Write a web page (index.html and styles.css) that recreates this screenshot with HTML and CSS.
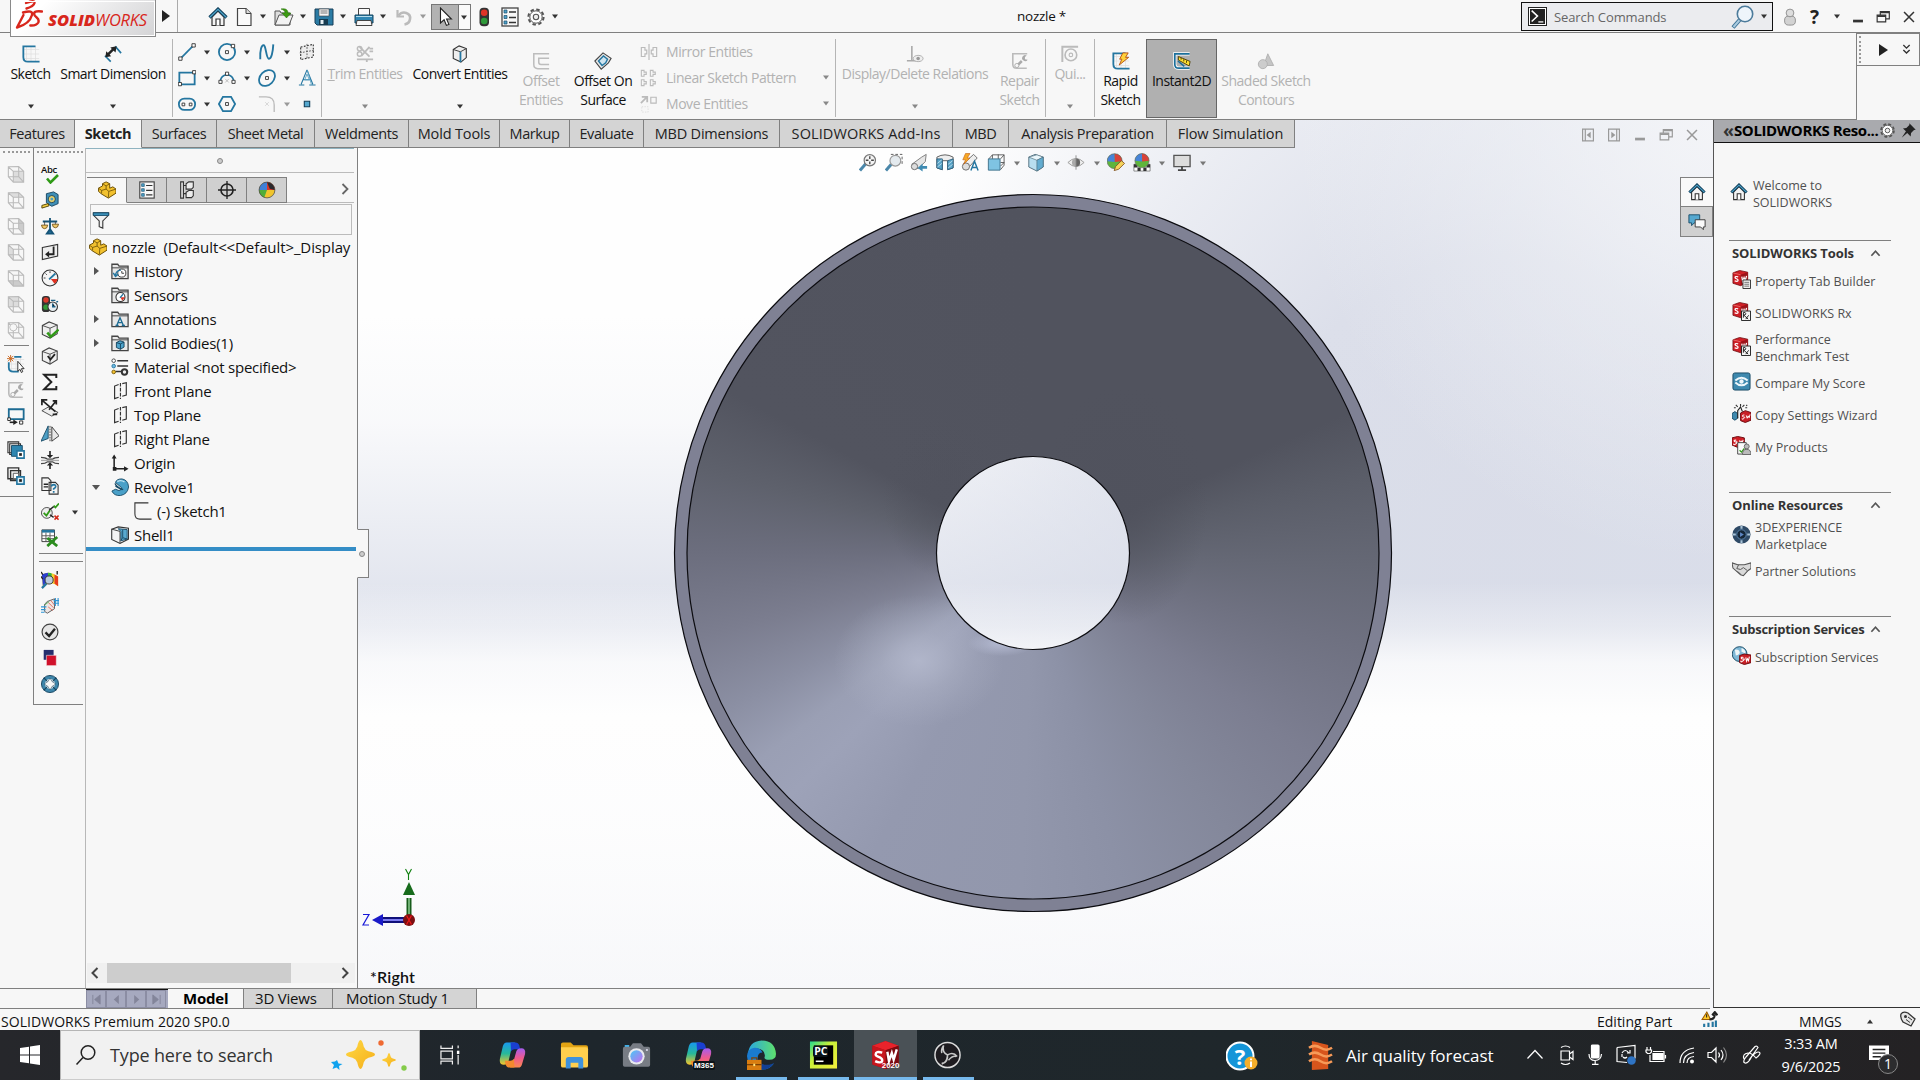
FILE: index.html
```html
<!DOCTYPE html>
<html lang="en">
<head>
<meta charset="utf-8">
<title>nozzle * - SOLIDWORKS</title>
<link rel="stylesheet" href="styles.css">
</head>
<body>
<svg class="defs" width="0" height="0">
<defs>
<linearGradient id="g-cop1" x1="0" y1="0" x2="0" y2="1"><stop offset="0" stop-color="#1897ee"/><stop offset=".5" stop-color="#27b99a"/><stop offset="1" stop-color="#f7c52a"/></linearGradient>
<linearGradient id="g-cop2" x1="0" y1="0" x2="0" y2="1"><stop offset="0" stop-color="#a45cf0"/><stop offset=".5" stop-color="#ee5a8e"/><stop offset="1" stop-color="#fb8a4e"/></linearGradient>
<linearGradient id="g-edge" x1="0" y1="0" x2="1" y2="0"><stop offset="0" stop-color="#2aa8e0"/><stop offset="1" stop-color="#5ee06c"/></linearGradient>
<linearGradient id="g-pc" x1="0" y1="0" x2="1" y2="1"><stop offset="0" stop-color="#22d88f"/><stop offset=".4" stop-color="#c8f03a"/><stop offset="1" stop-color="#f4ee3c"/></linearGradient>
<linearGradient id="g-star" x1="0" y1="0" x2="1" y2="1"><stop offset="0" stop-color="#ffd944"/><stop offset="1" stop-color="#f5ae1a"/></linearGradient>
<linearGradient id="g-cam" x1="0" y1="0" x2="1" y2="1"><stop offset="0" stop-color="#47c8f5"/><stop offset="1" stop-color="#c46cf0"/></linearGradient>
</defs>
<symbol id="caret" viewBox="0 0 8 5"><path d="M1 .5h6L4 4.5z" fill="currentColor"/></symbol>
<symbol id="home" viewBox="0 0 20 20"><path d="M4 10v8.500h12V10L10 4z" fill="#f4f4f4" stroke="#333" stroke-width="1.200"/><path d="M1.500 10.500 10 2.200l8.500 8.300" fill="none" stroke="#123f5a" stroke-width="3.200"/><path d="M1.800 10.200 10 2.400l8.200 7.800" fill="none" stroke="#4fa6cb" stroke-width="1.200"/><path d="M8 18.500v-6.500h4v6.500" fill="#fff" stroke="#333" stroke-width="1.200"/></symbol>
<symbol id="new" viewBox="0 0 20 20"><path d="M3.500 1.500h8.500l5 5v12H3.500z" fill="#fafafa" stroke="#444" stroke-width="1.200"/><path d="M12 1.500v5h5" fill="#ddd" stroke="#444"/></symbol>
<symbol id="open" viewBox="0 0 20 20"><path d="M1 18V4h5l1 2h9v12z" fill="#ddd" stroke="#555"/><path d="M1 18 5 8h14l-4 10z" fill="#f2f2f2" stroke="#555"/><path d="M7 2c5-1 7 1 7 4h3l-4.500 5L8 6h3c0-2-1-3-4-4z" fill="#3c9a12" stroke="#236a05" stroke-width=".5"/></symbol>
<symbol id="save" viewBox="0 0 20 20"><path d="M1 2h18v16H3l-2-2z" fill="#2a7ba4" stroke="#163f58"/><path d="M5 2h10v7H5z" fill="#f5f5f5" stroke="#444" stroke-width=".6"/><path d="M6.500 4h7M6.500 6h7" stroke="#777"/><path d="M5 12h9v6H5z" fill="#173b50"/><path d="M6.500 13h3v4h-3z" fill="#e4eef3"/></symbol>
<symbol id="print" viewBox="0 0 20 20"><path d="M4.500 8V1.500h11V8" fill="#fafafa" stroke="#444"/><path d="M1 8h18v8H1z" fill="#2f86b3" stroke="#15425d"/><path d="M2 9.500h16" stroke="#b5dceb"/><path d="M3 13.500h14l1 5H2z" fill="#f7f7f7" stroke="#444"/></symbol>
<symbol id="undo" viewBox="0 0 20 20"><path d="M3.500 3v6.500h6.500" fill="none" stroke="#bbb" stroke-width="2.200"/><path d="M4.500 8.500C9 3 17 6 16 12c-.4 3-2.600 5-5.500 5.500" fill="none" stroke="#bbb" stroke-width="2.600"/></symbol>
<symbol id="cursor" viewBox="0 0 20 20"><path d="M5.500 1v15l3.600-3.200 2.300 5.600 2.500-1-2.300-5.400h4.800z" fill="#fff" stroke="#222" stroke-width="1.100"/></symbol>
<symbol id="traffic" viewBox="0 0 20 20"><rect x="5.500" y=".8" width="9.500" height="18.400" rx="4" fill="#333"/><circle cx="10.200" cy="5.800" r="3.300" fill="#e03326"/><circle cx="10.200" cy="14" r="3.300" fill="#2f9a3a"/></symbol>
<symbol id="list" viewBox="0 0 20 20"><rect x="2" y="1" width="16" height="18" fill="#f8f8f8" stroke="#444" stroke-width="1.300"/><path d="M9 5h7M9 10.500h7M9 15.500h7" stroke="#333" stroke-width="1.300"/><path d="M4 3h3v3H4zM4 8.500h3v3H4zM4 14h3v3H4z" fill="#4ea2c9" stroke="#1b4f6e" stroke-width=".7"/></symbol>
<symbol id="gear" viewBox="0 0 20 20"><circle cx="10" cy="10" r="7.600" fill="none" stroke="#555" stroke-width="2" stroke-dasharray="3.500 2.470"/><circle cx="10" cy="10" r="6.200" fill="#fff" stroke="#555" stroke-width="1"/><circle cx="10" cy="10" r="2.700" fill="#eee" stroke="#555" stroke-width="1.100"/></symbol>
<symbol id="person" viewBox="0 0 20 20"><rect x="4" y="9" width="12" height="10" rx="4.500" fill="#d2d2d2" stroke="#8a8a8a"/><circle cx="10" cy="5.500" r="4.300" fill="#ddd" stroke="#8a8a8a"/></symbol>
<symbol id="restore" viewBox="0 0 20 20"><path d="M7 7.500V4h10v8h-4M3.500 8h9.500v7.500H3.500z" fill="none" stroke="currentColor" stroke-width="1.300"/><path d="M7 5h10M3.500 9h9.500" stroke="currentColor" stroke-width="1.800"/></symbol>
<symbol id="close" viewBox="0 0 20 20"><path d="M4.500 4.500l11 11M15.500 4.500l-11 11" stroke="currentColor" stroke-width="1.700"/></symbol>
<symbol id="min" viewBox="0 0 20 20"><path d="M4.500 13h11v3h-11z" fill="currentColor"/></symbol>
<symbol id="paneL" viewBox="0 0 20 20"><path d="M4 3.500h12v13H4zM7 4v12" fill="none" stroke="currentColor" stroke-width="1.300"/><path d="M13 6.500v7L8.500 10z" fill="currentColor"/></symbol>
<symbol id="mag" viewBox="0 0 24 24"><path d="M2 22.500 9 14.500" stroke="#3d7396" stroke-width="4"/><path d="M2.500 22 9 14.500" stroke="#a9cbe0" stroke-width="2"/><circle cx="14" cy="9" r="7.700" fill="#eef5fb" stroke="#4c7b9b" stroke-width="1.600"/></symbol>
<symbol id="grid" viewBox="0 0 20 20"><path d="M5 1.500v17M10 1.500v17M15 1.500v17M2 5h17M2 10h17M2 15h17" stroke="#ddd" stroke-width=".8"/></symbol>
<symbol id="sketch" viewBox="0 0 20 20"><use href="#grid"/><path d="M15 1.500H1.500v12q0 5 5 5h13" fill="none" stroke="#2476a0" stroke-width="2"/></symbol>
<symbol id="dim" viewBox="0 0 20 20"><path d="M1 12l6.500 6.500M12.500 1.500 19 9" stroke="#2476a0" stroke-width="1.800"/><path d="M4 11 11 4" stroke="#222" stroke-width="2.800"/><path d="M1.500 13.500l1-6.500 5.500 5.500zM14 1.500l-7 1.200 5.800 5.500z" fill="#222"/></symbol>
<symbol id="line" viewBox="0 0 20 20"><path d="M3 17 17 3" stroke="#2476a0" stroke-width="1.900"/><path d="M.8 15.500h3.700v3.700H.8zM15.500.8h3.700v3.700h-3.700z" fill="#fff" stroke="#333"/></symbol>
<symbol id="circ" viewBox="0 0 20 20"><circle cx="10" cy="10" r="9" fill="none" stroke="#2476a0" stroke-width="2"/><path d="M8.300 8.500h3.300v3.300H8.300zM14.800 1.500h3.700v3.700h-3.700z" fill="#fff" stroke="#333"/></symbol>
<symbol id="spline" viewBox="0 0 20 20"><path d="M2.500 18C2 8 4 1.500 6.500 2.500S9 17 12 17.500 16.500 10 17 1.500" fill="none" stroke="#2476a0" stroke-width="2.100"/></symbol>
<symbol id="plane" viewBox="0 0 20 20"><path d="M3 4.500 17 1.500v14L3 18.500z" fill="#ececec" stroke="#333" stroke-width="1.200" stroke-dasharray="2 1.600"/><path d="M10 1v17M2 11l16-3" stroke="#555" stroke-dasharray="2 1.500"/></symbol>
<symbol id="rect" viewBox="0 0 20 20"><path d="M1.500 4h17v13H1.500z" fill="none" stroke="#2476a0" stroke-width="2"/><path d="M.3 15h3.600v3.600H.3zM16.200 1.800h3.600v3.600h-3.600z" fill="#fff" stroke="#333"/></symbol>
<symbol id="arc" viewBox="0 0 20 20"><path d="M2.500 14C2.500 4 17.500 4 17.500 14" fill="none" stroke="#2476a0" stroke-width="1.900"/><path d="M1 12.500h3.500V16H1zM15.500 12.500H19V16h-3.500zM8.300 3.500h3.500V7H8.300z" fill="#fff" stroke="#333"/><path d="M8 11l4 4M12 11l-4 4" stroke="#aaa" stroke-width=".8"/></symbol>
<symbol id="ellipse" viewBox="0 0 20 20"><ellipse cx="10" cy="10" rx="10" ry="7.500" transform="rotate(-45 10 10)" fill="none" stroke="#2476a0" stroke-width="2"/><path d="M8.400 8.400h3.200v3.200H8.400z" fill="#fff" stroke="#333"/></symbol>
<symbol id="textA" viewBox="0 0 20 20"><path d="M10 1 3.500 17M10 1l6.500 16M5.500 12h9M1 17.800h6M12.500 17.800h7" fill="none" stroke="#2476a0" stroke-width="1.200"/><path d="M10.500 1.500 15 17.500M10 5.500 7.500 12h5z" fill="none" stroke="#5ea5c6" stroke-width="1"/></symbol>
<symbol id="slot" viewBox="0 0 20 20"><rect x="1" y="4" width="18" height="12.500" rx="6" fill="none" stroke="#2476a0" stroke-width="2"/><path d="M4.500 9h3v3h-3zM12.500 9h3v3h-3z" fill="#fff" stroke="#333"/></symbol>
<symbol id="poly" viewBox="0 0 20 20"><path d="M5.500 2h9L19 10l-4.500 8h-9L1 10z" fill="none" stroke="#2476a0" stroke-width="2"/><path d="M8.400 8.400h3.200v3.200H8.400z" fill="#fff" stroke="#333"/></symbol>
<symbol id="fillet" viewBox="0 0 20 20"><path d="M1 2h8q9 0 9 9v8" fill="none" stroke="#bbb" stroke-width="1.500"/><path d="M8 8l4 4M12 8l-4 4" stroke="#ccc" stroke-width=".8"/></symbol>
<symbol id="point" viewBox="0 0 20 20"><path d="M7 7h6v6H7z" fill="#55a8cf" stroke="#123f5a" stroke-width="1.200"/></symbol>
<symbol id="trim" viewBox="0 0 20 20"><path d="M4 2l11 11M15 2 6 12M1 16h18M12 16v3M15 4h4M15 7h4" stroke="#bcbcbc" stroke-width="2" fill="none"/><circle cx="4" cy="4" r="2.500" fill="none" stroke="#bcbcbc" stroke-width="1.600"/><circle cx="4" cy="10" r="2.500" fill="none" stroke="#bcbcbc" stroke-width="1.600"/></symbol>
<symbol id="convert" viewBox="0 0 20 20"><path d="M2.500 5 9 1l8 3v10l-6 5-8.500-4z" fill="#eee" stroke="#333" stroke-width="1.200"/><path d="M2.500 5l8 2.500 6.500-3.500" fill="none" stroke="#333"/><path d="M10.500 7.500V19" stroke="#2476a0" stroke-width="2"/></symbol>
<symbol id="offset" viewBox="0 0 20 20"><path d="M19 2H2v12q0 4.500 4.500 4.500H19M19 7H7.500v4.500q0 2.500 2.500 2.500h9" fill="none" stroke="#bdbdbd" stroke-width="1.700"/></symbol>
<symbol id="offsurf" viewBox="0 0 20 20"><path d="M1 10 10 1l9 6-3 5-8 7z" fill="#e8e8e8" stroke="#444" stroke-width="1.200"/><path d="M5 10l5.500-5.500L15 8l-2 4-4 3z" fill="#cfe4ef" stroke="#2476a0" stroke-width="1.600"/></symbol>
<symbol id="mirror" viewBox="0 0 20 20"><path d="M10 1v18M1.500 5v10h4v-3h2V8h-2V5zM18.500 5v10h-4v-3h-2V8h2V5z" fill="none" stroke="#bbb" stroke-width="1.300"/></symbol>
<symbol id="linpat" viewBox="0 0 20 20"><path d="M1.500 1.500v6.500h3V6h2.500V3.500H4.500v-2zM11.500 1.500v6.500h3V6h2.500V3.500h-2.500v-2zM1.500 12v6.500h3v-2h2.500V14H4.500v-2zM11.500 12v6.500h3v-2h2.500V14h-2.500v-2z" fill="none" stroke="#bbb" stroke-width="1.200"/></symbol>
<symbol id="move" viewBox="0 0 20 20"><path d="M1 9l6-6M2 2h6v6" fill="none" stroke="#bbb" stroke-width="2"/><path d="M12 2.500h6V9h-6z" fill="none" stroke="#bbb" stroke-width="1.300"/><path d="M2 13h7v6H2z" fill="none" stroke="#ddd" stroke-dasharray="1.500 1.500"/></symbol>
<symbol id="relations" viewBox="0 0 20 20"><path d="M6.500 1v16M1 17.500h10" stroke="#aaa" stroke-width="1.800"/><ellipse cx="13.500" cy="15" rx="5.500" ry="3.500" fill="#eee" stroke="#aaa"/><circle cx="13.500" cy="15" r="2" fill="#999"/></symbol>
<symbol id="repair" viewBox="0 0 20 20"><path d="M18 2H2v11.500q0 4.500 4.500 4.500h11" fill="none" stroke="#bbb" stroke-width="1.800"/><path d="M6 16l6-6" stroke="#aaa" stroke-width="2.800"/><path d="M17.500 4a3.300 3.300 0 1 0 1 4.500l-3-.5v-2.500z" fill="#aaa"/><circle cx="6.500" cy="15" r="2.300" fill="#f7f7f7" stroke="#aaa"/></symbol>
<symbol id="quick" viewBox="0 0 20 20"><path d="M1.500 19V2H19" fill="none" stroke="#bbb" stroke-width="2.200"/><circle cx="11" cy="11" r="6.500" fill="none" stroke="#bbb" stroke-width="1.800"/><circle cx="11" cy="11" r="2" fill="none" stroke="#bbb" stroke-width="1.300"/></symbol>
<symbol id="rapid" viewBox="0 0 20 20"><use href="#sketch"/><path d="M12 1h6l-3 5h3.500L8 14.500 11 8H8.500z" fill="#ffd23a" stroke="#b55014" stroke-width="1"/></symbol>
<symbol id="instant" viewBox="0 0 20 20"><path d="M18.500 2H2v11.500q0 4.500 4.500 4.500h12" fill="none" stroke="#fff" stroke-width="3.600"/><path d="M18.500 2H2v11.500q0 4.500 4.500 4.500h12" fill="none" stroke="#1c6f9a" stroke-width="1.900"/><path d="M6 5l13 5.500-1 5L6 9z" fill="#ffe033" stroke="#4a3b00"/><path d="M9 6.500v2M12 8v2.500M15 9.500v2.500" stroke="#4a3b00"/><path d="M5.500 10l7 6" stroke="#1c6f9a" stroke-width="1.800"/></symbol>
<symbol id="shaded" viewBox="0 0 20 20"><path d="M12 2l6.500 13h-11z" fill="#c5c5c5" stroke="#b0b0b0"/><circle cx="6.500" cy="13.500" r="5" fill="#ccc" stroke="#b0b0b0"/></symbol>
<!-- heads-up view toolbar -->
<symbol id="zfit" viewBox="0 0 20 20"><path d="M1 19l6.500-7.500" stroke="#4a87aa" stroke-width="3.400"/><circle cx="12" cy="7.500" r="6.300" fill="#f4f4f4" stroke="#777" stroke-width="1.300"/><path d="M12 3v3M12 9v3M7.500 7.500h3M13.500 7.500h3" stroke="#444" stroke-width="1.500"/></symbol>
<symbol id="zarea" viewBox="0 0 20 20"><path d="M6.500 1h12.500v12.500" fill="none" stroke="#555" stroke-dasharray="3 2"/><path d="M1 19l6-7" stroke="#4a87aa" stroke-width="3.400"/><circle cx="11.500" cy="8" r="6" fill="#e4eaee" stroke="#999" stroke-width="1.300"/></symbol>
<symbol id="prev" viewBox="0 0 20 20"><path d="M2 12 13 4l5-3-1 8-8 8z" fill="#e6e6e6" stroke="#777"/><circle cx="5" cy="14.500" r="3.500" fill="#ddd" stroke="#666"/><path d="M19 14h-5v-3l-5.500 5 5.500 4v-3h5z" fill="#3f8bb2"/></symbol>
<symbol id="section" viewBox="0 0 20 20"><path d="M1 4q9-5 18 0v12l-6 2V8H7v10l-6-2z" fill="#eee" stroke="#555"/><path d="M1 6h6v12l-6-2zM13 8l6-2v10l-6 2z" fill="#58a5c9" stroke="#2a5f7e"/><path d="M1.500 11l5-4M1.500 15l5-4M13.500 12l5-4M13.500 16l5-4" stroke="#d6ebf5" stroke-width=".8"/></symbol>
<symbol id="dynann" viewBox="0 0 20 20"><path d="M3 11 14 1l4 4L9 15z" fill="#eee" stroke="#666"/><circle cx="5.500" cy="14.500" r="4" fill="#ddd" stroke="#666"/><path d="M10 0H5L2 7h3l-2 5 7-7H7z" fill="#f7a823" stroke="#c4641b" stroke-width=".7"/><path d="M11 19l4-10.500 4 10.500M12.500 15.500h5" fill="none" stroke="#2476a0" stroke-width="1.600"/></symbol>
<symbol id="orient" viewBox="0 0 20 20"><path d="M6 6V1.500h13V13l-4 5M19 1.500 15 6M6 1.500 2 6M12.500 1v6M15 10h4M15 14l4-4" fill="none" stroke="#555"/><path d="M1.500 6h13v12.500h-13z" fill="#7fc3e2" stroke="#3a6e88"/></symbol>
<symbol id="dstyle" viewBox="0 0 20 20"><path d="M2 4 9 1l9 3v11l-7 4.500L2 15z" fill="#b8dff0" stroke="#4c6a79"/><path d="M2 4l9 3.500L18 4l-7-2.500z" fill="#e9f6fb" stroke="#4c6a79" stroke-width=".7"/><path d="M11 7.500 18 4v11l-7 4.500z" fill="#62acd0" stroke="#4c6a79" stroke-width=".7"/></symbol>
<symbol id="eye" viewBox="0 0 20 20"><path d="M1 10q9-9 18 0-9 9-18 0z" fill="#eee" stroke="#999"/><circle cx="10" cy="10" r="4.500" fill="#aaa"/><path d="M10 5.500v9a4.500 4.500 0 0 0 0-9z" fill="#666"/><path d="M10 2v16" stroke="#888" stroke-width="1"/></symbol>
<symbol id="ball" viewBox="0 0 20 20"><circle cx="10" cy="10" r="8.800" fill="#f0c52e"/><path d="M10 10 1.200 9.500A8.800 8.800 0 0 0 7 18.300z" fill="#4fae3a"/><path d="M10 10V1.200A8.800 8.800 0 0 0 1.200 10z" fill="#3f7fd6"/><path d="M10 10V1.200A8.800 8.800 0 0 1 18.800 10z" fill="#d9362c"/><circle cx="10" cy="10" r="8.800" fill="none" stroke="#444" stroke-width=".8"/></symbol>
<symbol id="ball-dark" viewBox="0 0 20 20"><use href="#ball"/><path d="M10 1.500q8 1 8.500 8.500L13 8.500z" fill="#2a2a2e"/></symbol>
<symbol id="ball-green" viewBox="0 0 20 20"><circle cx="10" cy="10" r="8.800" fill="#5fb53c"/><path d="M10 1.200A8.800 8.800 0 0 0 1.200 10l9 1z" fill="#4784d8"/><path d="M10 1.200A8.800 8.800 0 0 1 18.800 10l-8.600 1z" fill="#d9423a"/><circle cx="10" cy="10" r="8.800" fill="none" stroke="#666" stroke-width=".7"/></symbol>
<symbol id="appear" viewBox="0 0 20 20"><use href="#ball-green" x="-1" y="-1" width="19" height="19"/><path d="M8 19l1.500-4.500L16 8l3.500 3L13 17.500z" fill="#f5d35c" stroke="#7c4b1a" stroke-width=".9"/></symbol>
<symbol id="scene" viewBox="0 0 20 20"><path d="M1 12h18v7.500H1z" fill="#fff" stroke="#555" stroke-width=".7"/><path d="M1 12h4v3.500H1zM15 12h4v3.500h-4zM5 15.500h3.500v4H5zM11.500 15.500H15v4h-3.500z" fill="#333"/><use href="#ball-green" x="1" y="-1" width="18" height="18"/></symbol>
<symbol id="monitor" viewBox="0 0 20 20"><path d="M1 2h18v12.500H1z" fill="#dcdcdc" stroke="#555" stroke-width="1.500"/><path d="M10 14.500v4M5.500 18.500h9" stroke="#444" stroke-width="2"/></symbol>
<!-- standard views -->
<symbol id="cube" viewBox="0 0 20 20"><path d="M1.500 2v11L7 19h11.500V7L13 1.800zM7 19V7h11.500M7 7 1.500 2M13 2v11H1.500M13 13l5.500 6" fill="none" stroke="#bbb" stroke-width="1.200"/></symbol>
<symbol id="cube-a" viewBox="0 0 20 20"><path d="M7 7h11.500v12H7z" fill="#ddd"/><use href="#cube"/></symbol>
<symbol id="cube-b" viewBox="0 0 20 20"><path d="M1.500 2H13l5.500 5H7z" fill="#ddd"/><use href="#cube"/></symbol>
<symbol id="cube-c" viewBox="0 0 20 20"><path d="M13 2l5.500 5v12L13 13z" fill="#ccc"/><use href="#cube"/></symbol>
<symbol id="cube-d" viewBox="0 0 20 20"><path d="M1.500 2 7 7v12l-5.500-6z" fill="#ddd"/><use href="#cube"/></symbol>
<symbol id="cube-e" viewBox="0 0 20 20"><path d="M1.500 13H13l5.500 6H7z" fill="#ccc"/><use href="#cube"/></symbol>
<symbol id="cube-f" viewBox="0 0 20 20"><path d="M1.500 2H13v11H1.500z" fill="#ddd"/><use href="#cube"/></symbol>
<symbol id="cube-g" viewBox="0 0 20 20"><use href="#cube"/><circle cx="7" cy="7" r="4" fill="#f7f7f7" stroke="#bbb"/></symbol>
<symbol id="sksel" viewBox="0 0 20 20"><use href="#grid"/><path d="M16 2h-8M2 8v6q0 4.500 5 4.500h6" fill="none" stroke="#2476a0" stroke-width="2"/><path d="M4 0v8M0 4h8M1 1l6 6M7 1 1 7" stroke="#c8641c" stroke-width="1"/><path d="M12 7v11l2.500-2 1.500 3.500 1.500-1-1.500-3.300h3z" fill="#fff" stroke="#222"/></symbol>
<symbol id="modsk" viewBox="0 0 20 20"><path d="M2 2.500h16.500v11H2z" fill="none" stroke="#1d6b93" stroke-width="2"/><path d="M.8 12h3v3h-3zM14 15.500h3.500V19H14z" fill="#fff" stroke="#222"/><path d="M3 17h5" stroke="#222" stroke-width="1.800"/><path d="M7 14v6l5-3z" fill="#222"/></symbol>
<symbol id="stack1" viewBox="0 0 20 20"><path d="M1 1h12v12H1zM3 3h12v12H3z" fill="#eee" stroke="#333" stroke-width="1.200"/><path d="M5 5h12v12H5z" fill="#2e86b0" stroke="#174a65"/><path d="M11 11h8v8h-8z" fill="#fff" stroke="#2476a0" stroke-width="1.800"/><path d="M13.500 13.500h3v3h-3z" fill="#222"/></symbol>
<symbol id="stack2" viewBox="0 0 20 20"><path d="M1 1h12v12H1zM4 4h11v11H4z" fill="#eee" stroke="#333" stroke-width="1.500"/><path d="M7 7h6v6H7z" fill="#fff" stroke="#555"/><path d="M11 11h8v8h-8z" fill="#d9edf6" stroke="#2476a0" stroke-width="1.800"/><path d="M13.500 13.500h3v3h-3z" fill="#222"/></symbol>
<!-- tools toolbar -->
<symbol id="tape" viewBox="0 0 20 20"><path d="M6 3l8-2 5 3v10l-7 3-6-4z" fill="#3f8fb7" stroke="#14425d"/><circle cx="12" cy="9" r="4" fill="#e6d06b" stroke="#14425d"/><circle cx="12" cy="9" r="1.600" fill="#4aa0c8"/><path d="M8 14 1 16v3l8-2.500z" fill="#f4cf3f" stroke="#4a3b00"/></symbol>
<symbol id="scale" viewBox="0 0 20 20"><path d="M10 1v15M2 5h16M6.500 18.500h7l-3.500-5z" stroke="#155478" stroke-width="2" fill="#2476a0"/><path d="M.5 9h7q-.5 4-3.500 4T.5 9zM12.500 8h7q-.5 4-3.500 4t-3.500-4z" fill="#f0c96a" stroke="#6b4a10" stroke-width=".9"/><path d="M4 5v4M16 5v3" stroke="#333" stroke-width=".8"/></symbol>
<symbol id="secprop" viewBox="0 0 20 20"><path d="M1.500 5 18.500 1.500v13L1.500 18.500z" fill="#eee" stroke="#333" stroke-width="1.200"/><path d="M14 4v8.500H7" fill="none" stroke="#222" stroke-width="2"/><path d="M9 9v7l-4.500-3.500z" fill="#222"/></symbol>
<symbol id="gauge" viewBox="0 0 20 20"><circle cx="10" cy="10" r="8.800" fill="#f4f4f4" stroke="#333" stroke-width="1.200"/><path d="M11 11h7.500a8.500 8.500 0 0 1-3.500 5.500z" fill="#e03020"/><path d="M9 11.500 16 5" stroke="#2476a0" stroke-width="2"/><path d="M3 10h2M10 2.500v2M5 5l1.500 1.500" stroke="#333"/></symbol>
<symbol id="perf" viewBox="0 0 20 20"><rect x="1" y="1" width="9" height="18" rx="3.500" fill="#333"/><circle cx="5.500" cy="5.500" r="3" fill="#d93a2c"/><circle cx="5.500" cy="13.500" r="3" fill="#319a38"/><circle cx="13" cy="13" r="5.300" fill="#e9eff2" stroke="#333" stroke-width="1.200"/><path d="M13 9.500V13h3M11 6h5M17 8l2-1" stroke="#1b5f85" stroke-width="1.500"/></symbol>
<symbol id="box" viewBox="0 0 20 20"><path d="M1.500 5 9 1l9 3.500v9.500l-8 5-8.500-4z" fill="#efefef" stroke="#444" stroke-width="1.200"/><path d="M1.500 5 10 8l8-3.500M10 8v11" fill="none" stroke="#444"/></symbol>
<symbol id="boxcheck" viewBox="0 0 20 20"><use href="#box"/><path d="M7 13l4 4.500 8.500-8" fill="none" stroke="#2f9a16" stroke-width="2.800"/></symbol>
<symbol id="boxtick" viewBox="0 0 20 20"><use href="#box"/><path d="M7.500 10l3 4 5-6" fill="none" stroke="#222" stroke-width="2"/></symbol>
<symbol id="sigma" viewBox="0 0 20 20"><path d="M17 5.500V2H3.500l8 8-8 8H17v-3.500" fill="none" stroke="#222" stroke-width="2.200"/></symbol>
<symbol id="dev" viewBox="0 0 20 20"><path d="M1 13l7-4 11 6-7 4z" fill="#eee" stroke="#444"/><path d="M2 2l14 12M9 12l7-9M1 7V1h6M13 2h4v4M18 17h-5" fill="none" stroke="#222" stroke-width="1.900"/></symbol>
<symbol id="symm" viewBox="0 0 20 20"><path d="M8 1v14L0 18z" fill="#4d9fc5" stroke="#174a65"/><path d="M12 2l8 10-8 6z" fill="#e8e8e8" stroke="#333"/><path d="M10 1v18" stroke="#333" stroke-dasharray="2 1"/></symbol>
<symbol id="thick" viewBox="0 0 20 20"><path d="M0 7q5 0 7 2h6q2-2 7-2M0 14q5 0 7-2h6q2 2 7 2" fill="none" stroke="#444" stroke-width="1.300"/><path d="M0 10.500h20" stroke="#aaa" stroke-width="1.500"/><path d="M10 0v5M10 20v-5" stroke="#222" stroke-width="1.800"/><path d="M6.500 4.500h7L10 8zM6.500 16h7L10 12.500z" fill="#222"/></symbol>
<symbol id="docq" viewBox="0 0 20 20"><path d="M1 1h7l3 3v11H1zM9 6h7l3 3v10H9z" fill="#f4f4f4" stroke="#333" stroke-width="1.200"/><path d="M3 8h5M3 11h5" stroke="#222" stroke-width="1.500"/><path d="M11.500 10.500q.5-2 2.700-2 2.300.2 2.100 2.200-.2 1.300-2.200 2.300v1.300M14.100 15.600v1.800" fill="none" stroke="#2476a0" stroke-width="1.900"/></symbol>
<symbol id="dchk" viewBox="0 0 20 20"><circle cx="6.500" cy="11" r="6" fill="#eee" stroke="#444"/><path d="M3 11l3 3 4-6M14 3l2 2 4-4.500" fill="none" stroke="#2f9a16" stroke-width="2"/><path d="M9 8l5-4M10 13l4 3" stroke="#222" stroke-width="1.500"/><path d="M15 14l4.500 4.500M19.500 14 15 18.500" stroke="#d32a1a" stroke-width="1.700"/></symbol>
<symbol id="xls" viewBox="0 0 20 20"><path d="M1 1h14v13H1z" fill="#fff" stroke="#333"/><path d="M1 1h14v3H1z" fill="#2476a0"/><path d="M1 7.500h14M1 10.700h14M5.500 4v10M10 4v10" stroke="#555"/><path d="M7 10l11 9M18 9 7 19" stroke="#2b8c1e" stroke-width="3"/></symbol>
<symbol id="simx" viewBox="0 0 20 20"><path d="M1 4q9-5 18 2v11q-8-7-17 0z" fill="#f5d02e"/><path d="M1 4q4-2 7-2l-1 11q-3 1-5 3z" fill="#2b3fd0"/><path d="M8 2q3 0 4 1l-1 10-4-.5z" fill="#35b341"/><path d="M15 4l4 2v11l-4-3z" fill="#e83a1e"/><circle cx="9" cy="10" r="4.500" fill="#bcd" stroke="#333"/><path d="M1 19l5-5" stroke="#2476a0" stroke-width="2.500"/><path d="M0 1l2 3M0 6l2 3M18 0v4" stroke="#222" stroke-width="1.500"/></symbol>
<symbol id="flow" viewBox="0 0 20 20"><path d="M7 5l8-3v11l-8 5-3-2V8z" fill="#efe6e4" stroke="#555"/><path d="M8 6l6 6M8 11l5 4M11 4l4 5" stroke="#e06a5a"/><path d="M0 11h6M0 14h5M0 17h4M14 4h6M14 7h6M16 1v9M19 1v9" stroke="#2f97d8" stroke-width="1.200"/><path d="M4 9l5-4" stroke="#4eb45c"/></symbol>
<symbol id="okc" viewBox="0 0 20 20"><circle cx="10" cy="10" r="8.800" fill="#e6e6e6" stroke="#444" stroke-width="1.300"/><path d="M5 10.500l4 4 6.500-8" fill="none" stroke="#222" stroke-width="2.600"/></symbol>
<symbol id="sqs" viewBox="0 0 20 20"><path d="M3 1h11v11H3z" fill="#252e6e"/><path d="M6 7h11v11.500H6z" fill="#d0112b" stroke="#f7f7f7" stroke-width=".6"/></symbol>
<symbol id="life" viewBox="0 0 20 20"><circle cx="10" cy="10" r="7.500" fill="#f7f7f7" stroke="#3d86ab" stroke-width="4"/><circle cx="10" cy="10" r="9.500" fill="none" stroke="#14425d" stroke-width="1"/><path d="M10 3.500l2.500 4 4 2.500-4 2.500-2.500 4-2.500-4-4-2.500 4-2.500z" fill="#f7f7f7" stroke="#14425d" stroke-width=".6"/><path d="M3 3l4 4M17 3l-4 4M3 17l4-4M17 17l-4-4" stroke="#14425d" stroke-width="1.200"/></symbol>
<!-- feature tree -->
<symbol id="part" viewBox="0 0 20 20"><path d="M.5 8 5 5.500V3L9 1l4 2v5l3.500-1.500L20 9v4.500L11.500 19 4 14.500.5 11.500z" fill="#f2c12e" stroke="#6d5106" stroke-width="1.100"/><path d="M5 3l4 2.500L13 3M9 5.500V9l3 2.500L20 9M.5 8l3.500 2.500V14M4 10.500l5-1.500M12 11.500l-.5 7" fill="none" stroke="#6d5106" stroke-width=".9"/></symbol>
<symbol id="config" viewBox="0 0 20 20"><path d="M3 1h3v18H3zM6 5h3M6 14h3" stroke="#333" stroke-width="1.300" fill="#f4f4f4"/><path d="M9 3l3-2h5v6l-2 2H9zM9 12.500l3-2h5v6l-2 2H9z" fill="#ececec" stroke="#333" stroke-width="1.200"/></symbol>
<symbol id="target" viewBox="0 0 20 20"><circle cx="10" cy="10" r="6.700" fill="none" stroke="#222" stroke-width="1.800"/><path d="M10 0v20M0 10h20" stroke="#222" stroke-width="1.500"/></symbol>
<symbol id="funnel" viewBox="0 0 20 20"><path d="M1.500 2h17v2.500L12 11v8l-4-1.500V11L1.500 4.500z" fill="#f0f0f0" stroke="#333" stroke-width="1.200"/><path d="M1.500 2h17v3h-17z" fill="#3a8eb6" stroke="#17506f"/></symbol>
<symbol id="folder" viewBox="0 0 20 20"><path d="M1 18.500V2.500h6.500l1.500 2h10v14z" fill="#e8e8e8" stroke="#444" stroke-width="1.400"/><path d="M1 6.500h18" stroke="#444" stroke-width="1.100"/></symbol>
<symbol id="f-hist" viewBox="0 0 20 20"><use href="#folder"/><circle cx="12" cy="12.300" r="4.500" fill="#fff" stroke="#333"/><path d="M12 10v2.500h2.500" stroke="#333" fill="none"/><path d="M5 15.500q0-6 6-6.500M2.500 12l2.500 4 3-2.500" stroke="#2476a0" stroke-width="1.600" fill="none"/></symbol>
<symbol id="f-sens" viewBox="0 0 20 20"><use href="#folder"/><circle cx="10.500" cy="12.300" r="5" fill="#fff" stroke="#333" stroke-width="1.200"/><path d="M10.500 12.500h5l-3 4z" fill="#e03020"/><path d="M10 13l3.500-4" stroke="#2476a0" stroke-width="1.500"/></symbol>
<symbol id="f-ann" viewBox="0 0 20 20"><use href="#folder"/><path d="M6.500 17 10 8.500 13.700 17M7.500 14h5M5 17.200h3.500M12 17.200h3.500" fill="none" stroke="#1d6b93" stroke-width="1.500"/></symbol>
<symbol id="f-body" viewBox="0 0 20 20"><use href="#folder"/><path d="M6 9.500l4-2 4.500 1.500v5.500l-4 2.500L6 15z" fill="#4ea5cd" stroke="#123f5a"/><path d="M6 9.500l4.500 1.500 4-2M10.500 11v6" stroke="#123f5a" fill="none"/></symbol>
<symbol id="material" viewBox="0 0 20 20"><path d="M7 3h12M7 9h12M5 15h14" stroke="#333" stroke-width="1.700"/><circle cx="3" cy="3" r="2" fill="#fff" stroke="#444"/><circle cx="3" cy="9" r="2" fill="#6fb9e0" stroke="#2476a0"/><circle cx="3" cy="15.500" r="2" fill="#f2c12e" stroke="#7c5b06"/><circle cx="15" cy="15.500" r="3" fill="#eee" stroke="#333" stroke-width="2.200"/></symbol>
<symbol id="f-plane" viewBox="0 0 20 20"><path d="M8.500 2.800 4 4.500v14l4.500-1.600M12.500 1.800 17 .8v13.700l-4.500 1.400" fill="none" stroke="#333" stroke-width="1.300"/><path d="M10.500 1v18" stroke="#333" stroke-width="1.300" stroke-dasharray="4 1.500"/></symbol>
<symbol id="origin" viewBox="0 0 20 20"><path d="M3.500 3v13.500H17" fill="none" stroke="#222" stroke-width="1.700"/><path d="M.8 5 3.500.5 6.200 5zM14.500 13.500l5 3-5 3zM2 14.500h4v4H2z" fill="#222"/></symbol>
<symbol id="revolve" viewBox="0 0 20 20"><path d="M5 5q1-4 7-4 7 1 7.500 9-1 8-9 9.500-7 .5-9.500-5l4-2 4 1.500q3-1 3-3z" fill="#4aa0c8" stroke="#174a65"/><path d="M4.500 6q1 4 9 7M5 9l7 4" stroke="#174a65" stroke-width="1.500" fill="none"/><path d="M7 4q4-2.500 8 .5" stroke="#bfe3f2" stroke-width="1.500" fill="none"/></symbol>
<symbol id="f-sketch" viewBox="0 0 20 20"><path d="M16 1H1v12q0 6 5.500 6h13" fill="none" stroke="#333" stroke-width="1.200"/></symbol>
<symbol id="shell" viewBox="0 0 20 20"><path d="M.8 3.500 8 1l11.500 1.500v12L10 19.300.8 15z" fill="#f4f4f4" stroke="#333" stroke-width="1.200"/><path d="M.8 3.500 10 6v13" fill="none" stroke="#333"/><path d="M8 3l10 1v10.500l-7 2V6z" fill="#58a9cf" stroke="#174a65"/><path d="M13 4v9l5 1.500M13 13l-2 3" stroke="#174a65" fill="none"/></symbol>
<!-- task pane -->
<symbol id="chat" viewBox="0 0 20 20"><path d="M1 2h12v9H7l-3 3v-3H1z" fill="#55a8cf" stroke="#174a65"/><path d="M8 7.500h11v8h-2v3l-3-3H8z" fill="#fafafa" stroke="#333"/></symbol>
<symbol id="swcube" viewBox="0 0 20 20"><path d="M1 3 8 .5l8.500 1.800V13L9 16.500 1 14z" fill="#cf1f26" stroke="#6d0a0e" stroke-width=".8"/><path d="M9 5l7.500-2.700V13L9 16.500z" fill="#9c1218"/><path d="M1 3 9 5" stroke="#ef7a76" fill="none" stroke-width=".8"/><path d="M6.500 7.200q-3.300-1-3.300.8c0 1.400 3.200 1 3.200 2.700 0 1.500-2 1.400-3.600.6M10.300 7l.9 5 1.500-4 1.200 3.200 1.400-5" fill="none" stroke="#fff" stroke-width="1.300"/></symbol>
<symbol id="sw-tab" viewBox="0 0 20 20"><use href="#swcube"/><path d="M11.500 10.500h8v9h-8z" fill="#eee" stroke="#333"/><path d="M13 13h5M13 15h5M13 17h5" stroke="#555" stroke-width=".8"/></symbol>
<symbol id="sw-rx" viewBox="0 0 20 20"><use href="#swcube"/><path d="M10 9.500h9.500v10H10z" fill="#f4f4f4" stroke="#222"/><path d="M12 16.500v-5.500h1.700q1.600 1.300 0 2.700H12.300l4.700 4.300M17.500 14l-3 4" fill="none" stroke="#222" stroke-width="1"/></symbol>
<symbol id="score" viewBox="0 0 20 20"><rect x="1" y="1" width="18" height="18" rx="2" fill="#3e89ae" stroke="#174a65"/><path d="M3.500 9q6.500-6 13 0M16.500 11q-6.500 6-13 0" stroke="#eef7fb" stroke-width="2" fill="none"/><circle cx="10" cy="10" r="2.300" fill="#eef7fb"/></symbol>
<symbol id="sw-wiz" viewBox="0 0 20 20"><path d="M0 10l3-2 3 2v5l-3 2-3-2z" fill="#3e89ae" stroke="#174a65"/><path d="M6 15V7l3-4 2 5" fill="#eee" stroke="#222" stroke-width="1.200"/><path d="M4 1l2 2M9 0v2M13 1l-2 2M2 4h2M14 4h2M16 1l-1 1" stroke="#333" stroke-width="1.200"/><path d="M9 9.500l5-2.500 6 2v8L14 19.500l-5-2z" fill="#c81f26" stroke="#6d0a0e"/><path d="M13 11.500q-2.500 0-2 1.300t2 1-.5 1.500-1.800-.2M15 12l1 3 1-2.500 1 2 1-3.500" fill="none" stroke="#fff" stroke-width="1"/></symbol>
<symbol id="sw-prod" viewBox="0 0 20 20"><path d="M0 2l6-1.500 7 1.500v8L6 12 0 9.500z" fill="#cf1f26" stroke="#6d0a0e"/><path d="M4.500 4.500q-2.500-.5-2.300.7t2.300 1-.5 2-2-.2M8 4.500l.7 3 1-2 1 1.500 1-3" fill="none" stroke="#fff" stroke-width="1.100"/><path d="M6 7h9v12H6z" fill="#fafafa" stroke="#444"/><path d="M8 15l2 2 3-4" stroke="#2f9a16" fill="none" stroke-width="1.300"/><circle cx="15.500" cy="11" r="2.600" fill="#bbb" stroke="#666"/><path d="M11 19.500q0-5.500 4.500-5.500t4.500 5.500z" fill="#bbb" stroke="#666"/></symbol>
<symbol id="3dx" viewBox="0 0 20 20"><circle cx="10" cy="10" r="9.500" fill="#2f4a66"/><circle cx="10" cy="10" r="5" fill="#152637" stroke="#5e87b0"/><path d="M8.500 7.500v5l4-2.500z" fill="#5d86c4"/><path d="M10 1v3M10 16v3M1 10h3M16 10h3" stroke="#a8c3d8" stroke-width="2.200"/></symbol>
<symbol id="hands" viewBox="0 0 20 20"><path d="M0 3l6 2h7l7-2v6l-3 2-5 5.500-3-1-8-7z" fill="#d9d9d9" stroke="#555" stroke-width="1.100"/><path d="M7 5l-2 4 4 1 3-2 4 3M6 12l3 3" stroke="#555" fill="none"/></symbol>
<symbol id="sw-sub" viewBox="0 0 20 20"><circle cx="8" cy="8.500" r="7.800" fill="#7fb8d6" stroke="#174a65"/><path d="M3 4q4-1 5 2t-4 4zM10 2q5 2 4 6l-4-2z" fill="#eef5f8"/><path d="M8 10l5-1.500 7 1v8L13 19.500l-5-2z" fill="#c81f26" stroke="#6d0a0e"/><path d="M12 12q-2.500-.5-2.300.7t2.300 1-.5 2-2-.2M14.500 12l.8 4 1-2.500 1 2 1-4.200" fill="none" stroke="#fff" stroke-width="1.100"/></symbol>
<symbol id="pin" viewBox="0 0 20 20"><path d="M11 1.500l7.500 7.500-2 .5-3.500 3.500-.5 4-4-4L2 18.500 7 11 3.500 7.500l4-.5L11 3.500z" fill="#222"/></symbol>
<!-- taskbar -->
<symbol id="sparkle" viewBox="0 0 20 20"><path d="M10 0q1.300 0 2.200 4.500.8 2.500 3.300 3.300Q20 8.700 20 10q0 1.300-4.500 2.200-2.500.8-3.300 3.300Q11.300 20 10 20q-1.300 0-2.200-4.500-.8-2.500-3.300-3.300Q0 11.300 0 10q0-1.300 4.500-2.200 2.500-.8 3.300-3.300Q8.700 0 10 0z" fill="url(#g-star)"/></symbol>
<symbol id="copilot" viewBox="0 0 30 30"><path d="M9 2h9q-3 1-4.500 8L11 21q-1 4-5 4-5 0-4-6L5 6q1-4 4-4z" fill="url(#g-cop1)"/><path d="M13 2h5q3 0 4 3l1 4h-6q-2 0-3.500 2z" fill="#1a3fd0"/><path d="M21 28h-9q3-1 4.500-8L19 11q1-3 5-3 5 0 4 6l-3 10q-1 4-4 4z" fill="url(#g-cop2)"/><path d="M17 28h-5q-3 0-4-3l-1-4h6q2 0 3.500-2z" fill="#f28a2e"/></symbol>
</svg>

<header class="titlebar">
  <div class="brand">
    <svg class="ds" viewBox="0 0 28 32"><g fill="none" stroke="#d8261c" stroke-width="2.400" stroke-linecap="round" stroke-linejoin="round"><path d="M11 4q9-3.500 8.500 0-1 3.500-8 5.500"/><path d="M8 13.500q10.500-3 9 2.500Q14.500 25 2 28.500L8.500 16"/><path d="M27 12.500q-7.500-1-8 2 0 2 2.700 4t1.600 5q-2 3.500-8 3"/></g></svg>
    <span class="brand-name"><b>SOLID</b>WORKS</span>
  </div>
  <span class="brand-arrow"></span>
  <div class="quick">
    <svg class="ic gap6"><use href="#home"/></svg>
    <svg class="ic"><use href="#new"/></svg><span class="cc"><svg class="caret"><use href="#caret"/></svg></span>
    <svg class="ic"><use href="#open"/></svg><span class="cc"><svg class="caret"><use href="#caret"/></svg></span>
    <svg class="ic"><use href="#save"/></svg><span class="cc"><svg class="caret"><use href="#caret"/></svg></span>
    <svg class="ic"><use href="#print"/></svg><span class="cc"><svg class="caret"><use href="#caret"/></svg></span>
    <svg class="ic"><use href="#undo"/></svg><span class="cc last dim"><svg class="caret"><use href="#caret"/></svg></span>
    <span class="select-btn"><i><svg class="ic"><use href="#cursor"/></svg></i><svg class="caret"><use href="#caret"/></svg></span>
    <svg class="ic gap6"><use href="#traffic"/></svg>
    <svg class="ic gap6"><use href="#list"/></svg>
    <svg class="ic"><use href="#gear"/></svg><span class="cc"><svg class="caret"><use href="#caret"/></svg></span>
  </div>
  <div class="doc-title">nozzle *</div>
  <div class="search"><span class="prompt"><svg viewBox="0 0 18 18"><path d="M2 2l7 6.500L2 15" fill="none" stroke="#fff" stroke-width="1.800"/><path d="M10 15.500h6" stroke="#fff" stroke-width="1.500"/></svg></span><span class="search-text">Search Commands</span><svg class="mag"><use href="#mag"/></svg><svg class="caret"><use href="#caret"/></svg></div>
  <div class="winctl">
    <svg class="ic person"><use href="#person"/></svg><span class="qm">?</span><svg class="caret"><use href="#caret"/></svg>
    <svg class="ic b1"><use href="#min"/></svg><svg class="ic b2"><use href="#restore"/></svg><svg class="ic b3"><use href="#close"/></svg>
  </div>
</header>

<div class="ribbon-row">
<div class="ribbon">
  <div class="cmd w61"><svg class="ic"><use href="#sketch"/></svg><span>Sketch</span><svg class="caret"><use href="#caret"/></svg></div>
  <div class="cmd w104"><svg class="ic"><use href="#dim"/></svg><span>Smart Dimension</span><svg class="caret"><use href="#caret"/></svg></div>
  <i class="vsep ml7"></i>
  <div class="entities">
    <svg class="ic"><use href="#line"/></svg><svg class="caret"><use href="#caret"/></svg><svg class="ic"><use href="#circ"/></svg><svg class="caret"><use href="#caret"/></svg><svg class="ic"><use href="#spline"/></svg><svg class="caret"><use href="#caret"/></svg><svg class="ic"><use href="#plane"/></svg>
    <svg class="ic"><use href="#rect"/></svg><svg class="caret"><use href="#caret"/></svg><svg class="ic"><use href="#arc"/></svg><svg class="caret"><use href="#caret"/></svg><svg class="ic"><use href="#ellipse"/></svg><svg class="caret"><use href="#caret"/></svg><svg class="ic"><use href="#textA"/></svg>
    <svg class="ic"><use href="#slot"/></svg><svg class="caret"><use href="#caret"/></svg><svg class="ic"><use href="#poly"/></svg><i></i><svg class="ic"><use href="#fillet"/></svg><svg class="caret dim"><use href="#caret"/></svg><svg class="ic"><use href="#point"/></svg>
  </div>
  <i class="vsep"></i>
  <div class="cmd w86 off"><svg class="ic"><use href="#trim"/></svg><span><u>T</u>rim Entities</span><svg class="caret"><use href="#caret"/></svg></div>
  <div class="cmd w104"><svg class="ic"><use href="#convert"/></svg><span>Convert Entities</span><svg class="caret"><use href="#caret"/></svg></div>
  <div class="cmd two w58 off"><svg class="ic"><use href="#offset"/></svg><span>Offset<br>Entities</span></div>
  <div class="cmd two w66"><svg class="ic"><use href="#offsurf"/></svg><span>Offset On<br>Surface</span></div>
  <div class="stack off">
    <div><svg class="ic"><use href="#mirror"/></svg><span>Mirror Entities</span></div>
    <div><svg class="ic"><use href="#linpat"/></svg><span>Linear Sketch Pattern</span><svg class="caret"><use href="#caret"/></svg></div>
    <div><svg class="ic"><use href="#move"/></svg><span>Move Entities</span><svg class="caret"><use href="#caret"/></svg></div>
  </div>
  <i class="vsep"></i>
  <div class="cmd w158 off"><svg class="ic"><use href="#relations"/></svg><span>Display/Delete Relations</span><svg class="caret"><use href="#caret"/></svg></div>
  <div class="cmd two w51 off"><svg class="ic"><use href="#repair"/></svg><span>Repair<br>Sketch</span></div>
  <i class="vsep"></i>
  <div class="cmd w48 off"><svg class="ic"><use href="#quick"/></svg><span>Qui...</span><svg class="caret"><use href="#caret"/></svg></div>
  <i class="vsep"></i>
  <div class="cmd two w51"><svg class="ic"><use href="#rapid"/></svg><span>Rapid<br>Sketch</span></div>
  <div class="cmd two w71 on"><svg class="ic"><use href="#instant"/></svg><span>Instant2D</span></div>
  <div class="cmd two w98 off"><svg class="ic"><use href="#shaded"/></svg><span>Shaded Sketch<br>Contours</span></div>
</div>
<div class="mini-bar"><i class="grip-v"></i><i class="play"></i><svg class="dbl" viewBox="0 0 10 12"><path d="M1.500 1 5 4.500 8.500 1M1.500 6.500 5 10l3.500-3.500" fill="none" stroke="#333" stroke-width="1.500"/></svg></div>
</div>

<div class="middle">
<main class="workspace">
  <nav class="cm-tabs"><span class="t1">Features</span><span class="t2 active">Sketch</span><span class="t3">Surfaces</span><span class="t4">Sheet Metal</span><span class="t5">Weldments</span><span class="t6">Mold Tools</span><span class="t7">Markup</span><span class="t8">Evaluate</span><span class="t9">MBD Dimensions</span><span class="t10">SOLIDWORKS Add-Ins</span><span class="t11">MBD</span><span class="t12">Analysis Preparation</span><span class="t13">Flow Simulation</span></nav>
  <div class="doc-area">
    <div class="side">
    <div class="bar bar1">
      <i class="grip"></i>
      <svg class="ic"><use href="#cube-a"/></svg><svg class="ic"><use href="#cube-b"/></svg><svg class="ic"><use href="#cube-c"/></svg><svg class="ic"><use href="#cube-d"/></svg><svg class="ic"><use href="#cube-e"/></svg><svg class="ic"><use href="#cube-f"/></svg><svg class="ic"><use href="#cube-g"/></svg>
      <i class="hsep"></i>
      <svg class="ic"><use href="#sksel"/></svg><svg class="ic"><use href="#repair"/></svg><svg class="ic"><use href="#modsk"/></svg>
      <i class="hsep"></i>
      <svg class="ic"><use href="#stack1"/></svg><svg class="ic"><use href="#stack2"/></svg>
    </div>
    <div class="bar bar2">
      <i class="grip"></i>
      <div class="abc"><b>Abc</b><svg viewBox="0 0 13 10"><path d="M1 4.500 4.500 8.500 12 1" fill="none" stroke="#2f9a16" stroke-width="2.600"/></svg></div>
      <svg class="ic"><use href="#tape"/></svg><svg class="ic"><use href="#scale"/></svg><svg class="ic"><use href="#secprop"/></svg><svg class="ic"><use href="#gauge"/></svg><svg class="ic"><use href="#perf"/></svg><svg class="ic"><use href="#boxcheck"/></svg><svg class="ic"><use href="#boxtick"/></svg><svg class="ic"><use href="#sigma"/></svg><svg class="ic"><use href="#dev"/></svg><svg class="ic"><use href="#symm"/></svg><svg class="ic"><use href="#thick"/></svg><svg class="ic"><use href="#docq"/></svg>
      <div class="with-caret"><svg class="ic"><use href="#dchk"/></svg><svg class="caret"><use href="#caret"/></svg></div>
      <svg class="ic"><use href="#xls"/></svg>
      <i class="hsep h1"></i><i class="hsep h2"></i>
      <svg class="ic"><use href="#simx"/></svg><svg class="ic"><use href="#flow"/></svg><svg class="ic"><use href="#okc"/></svg><svg class="ic"><use href="#sqs"/></svg><svg class="ic"><use href="#life"/></svg>
    </div>
    </div>
    <aside class="fm">
      <div class="fm-top"><i class="dot"></i></div>
      <div class="fm-tabs"><span class="active"><svg class="ic"><use href="#part"/></svg></span><span><svg class="ic"><use href="#list"/></svg></span><span><svg class="ic"><use href="#config"/></svg></span><span><svg class="ic"><use href="#target"/></svg></span><span><svg class="ic"><use href="#ball-dark"/></svg></span><svg class="more" viewBox="0 0 8 12"><path d="M1.500 1 6.500 6l-5 5" fill="none" stroke="#666" stroke-width="1.800"/></svg></div>
      <div class="filter"><svg class="ic"><use href="#funnel"/></svg></div>
      <div class="tree">
        <div class="root"><svg class="ic"><use href="#part"/></svg><span>nozzle&nbsp; (Default&lt;&lt;Default&gt;_Display</span></div>
        <div><i class="tw r"></i><svg class="ic"><use href="#f-hist"/></svg><span>History</span></div>
        <div><i class="tw"></i><svg class="ic"><use href="#f-sens"/></svg><span>Sensors</span></div>
        <div><i class="tw r"></i><svg class="ic"><use href="#f-ann"/></svg><span>Annotations</span></div>
        <div><i class="tw r"></i><svg class="ic"><use href="#f-body"/></svg><span>Solid Bodies(1)</span></div>
        <div><i class="tw"></i><svg class="ic"><use href="#material"/></svg><span>Material &lt;not specified&gt;</span></div>
        <div><i class="tw"></i><svg class="ic"><use href="#f-plane"/></svg><span>Front Plane</span></div>
        <div><i class="tw"></i><svg class="ic"><use href="#f-plane"/></svg><span>Top Plane</span></div>
        <div><i class="tw"></i><svg class="ic"><use href="#f-plane"/></svg><span>Right Plane</span></div>
        <div><i class="tw"></i><svg class="ic"><use href="#origin"/></svg><span>Origin</span></div>
        <div><i class="tw d"></i><svg class="ic"><use href="#revolve"/></svg><span>Revolve1</span></div>
        <div class="child"><i class="tw"></i><svg class="ic"><use href="#f-sketch"/></svg><span>(-) Sketch1</span></div>
        <div><i class="tw"></i><svg class="ic"><use href="#shell"/></svg><span>Shell1</span></div>
      </div>
      <div class="rollback"></div>
      <div class="hscroll"><svg viewBox="0 0 8 12"><path d="M6.500 1 1.500 6l5 5" fill="none" stroke="#444" stroke-width="2"/></svg><i class="thumb"></i><svg viewBox="0 0 8 12"><path d="M1.500 1 6.500 6l-5 5" fill="none" stroke="#444" stroke-width="2"/></svg></div>
      <div class="fm-handle"><i class="dot"></i></div>
    </aside>
    <section class="viewport">
      <div class="hud">
        <svg class="ic"><use href="#zfit"/></svg><svg class="ic"><use href="#zarea"/></svg><svg class="ic"><use href="#prev"/></svg><svg class="ic"><use href="#section"/></svg><svg class="ic"><use href="#dynann"/></svg><svg class="ic"><use href="#orient"/></svg><svg class="caret"><use href="#caret"/></svg><svg class="ic"><use href="#dstyle"/></svg><svg class="caret"><use href="#caret"/></svg><svg class="ic"><use href="#eye"/></svg><svg class="caret"><use href="#caret"/></svg><svg class="ic"><use href="#appear"/></svg><svg class="ic"><use href="#scene"/></svg><svg class="caret"><use href="#caret"/></svg><svg class="ic"><use href="#monitor"/></svg><svg class="caret"><use href="#caret"/></svg>
      </div>
      <div class="nozzle"><div class="shade"></div>
        <svg viewBox="-360 -360 720 720"><circle r="352.300" fill="none" stroke="#7f8194" stroke-width="12.500"/><g fill="none" stroke="#0c0c10" stroke-width="1.200"><circle r="358.500"/><circle r="346"/><circle r="96.500"/></g></svg>
      </div>
      <svg class="triad" viewBox="0 0 70 70"><path d="M47 57V30" stroke="#175c1b" stroke-width="5"/><path d="M47 57V30" stroke="#86c48a" stroke-width="1.600"/><path d="M41 27h12L47 14z" fill="#176b1c"/><path d="M47 52H20" stroke="#10107a" stroke-width="6"/><path d="M47 52H20" stroke="#7d7df0" stroke-width="2"/><path d="M21 46v12L10 52z" fill="#1a1ac8"/><circle cx="47" cy="52" r="6" fill="#7c0f12"/><path d="M44.500 47.500l5 9M49.500 47.500l-5 9" stroke="#f01818" stroke-width="1.200"/><path d="M43.500 1l3 5.500 3-5.500M46.500 6.500V12" fill="none" stroke="#108010" stroke-width="1.100"/><path d="M1 46.500h6L1 57h6" fill="none" stroke="#1818d8" stroke-width="1.200"/></svg>
      <div class="view-name">*Right</div>
    </section>
  </div>
  <div class="doc-ctl"><svg class="ic"><use href="#paneL"/></svg><svg class="ic flip"><use href="#paneL"/></svg><svg class="ic"><use href="#min"/></svg><svg class="ic"><use href="#restore"/></svg><svg class="ic"><use href="#close"/></svg></div>
  <div class="tp-tabs"><span class="active"><svg class="ic"><use href="#home"/></svg></span><span><svg class="ic"><use href="#chat"/></svg></span></div>
  <div class="model-tabs">
    <div class="nav"><i><svg viewBox="0 0 12 12"><path d="M2 1v10M10 1 4 6l6 5z" stroke="#83859a" fill="#83859a"/></svg></i><i><svg viewBox="0 0 12 12"><path d="M8.500 1 3 6l5.500 5z" fill="#83859a"/></svg></i><i><svg viewBox="0 0 12 12"><path d="M3.500 1 9 6l-5.500 5z" fill="#83859a"/></svg></i><i><svg viewBox="0 0 12 12"><path d="M10 1v10M2 1l6 5-6 5z" stroke="#83859a" fill="#83859a"/></svg></i></div>
    <span class="m1 active">Model</span><span class="m2">3D Views</span><span class="m3">Motion Study 1</span>
  </div>
</main>
<aside class="taskpane">
  <div class="tp-head"><span class="chev">«</span><b>SOLIDWORKS Reso...</b><svg class="ic"><use href="#gear"/></svg><svg class="ic pin"><use href="#pin"/></svg></div>
  <div class="tp-body">
    <div class="welcome"><svg class="ic"><use href="#home"/></svg><span>Welcome to<br>SOLIDWORKS</span></div>
    <section class="s1"><h3>SOLIDWORKS Tools<svg viewBox="0 0 12 8"><path d="M1.500 7 6 2l4.500 5" fill="none" stroke="#555" stroke-width="1.800"/></svg></h3>
      <div><svg class="ic"><use href="#sw-tab"/></svg><span>Property Tab Builder</span></div>
      <div><svg class="ic"><use href="#sw-rx"/></svg><span>SOLIDWORKS Rx</span></div>
      <div class="dbl2"><svg class="ic"><use href="#sw-rx"/></svg><span>Performance<br>Benchmark Test</span></div>
      <div><svg class="ic"><use href="#score"/></svg><span>Compare My Score</span></div>
      <div><svg class="ic"><use href="#sw-wiz"/></svg><span>Copy Settings Wizard</span></div>
      <div><svg class="ic"><use href="#sw-prod"/></svg><span>My Products</span></div>
    </section>
    <section class="s2"><h3>Online Resources<svg viewBox="0 0 12 8"><path d="M1.500 7 6 2l4.500 5" fill="none" stroke="#555" stroke-width="1.800"/></svg></h3>
      <div class="dbl2"><svg class="ic"><use href="#3dx"/></svg><span>3DEXPERIENCE<br>Marketplace</span></div>
      <div><svg class="ic"><use href="#hands"/></svg><span>Partner Solutions</span></div>
    </section>
    <section class="s3"><h3>Subscription Services<svg viewBox="0 0 12 8"><path d="M1.500 7 6 2l4.500 5" fill="none" stroke="#555" stroke-width="1.800"/></svg></h3>
      <div><svg class="ic"><use href="#sw-sub"/></svg><span>Subscription Services</span></div>
    </section>
  </div>
</aside>
</div>

<footer class="status"><span class="ver">SOLIDWORKS Premium 2020 SP0.0</span><span class="edit">Editing Part</span>
  <svg class="rebuild" viewBox="0 0 16 16"><path d="M1 8 5.500 1 9 8z" fill="#ffc928" stroke="#9a5a00"/><path d="M5.300 3v3" stroke="#222"/><path d="M8 8q5 0 5-5M10.500 4l2.500-3 2.500 3" fill="none" stroke="#222" stroke-width="1.900"/><path d="M2 15v-3h2v3zM6 15v-4h2v4zM10 15v-5h2v5zM13 15V9h2v6z" fill="#2476a0"/></svg>
  <span class="units">MMGS</span><svg class="caret up"><use href="#caret"/></svg>
  <svg class="tag" viewBox="0 0 16 16"><path d="M1 3q2-3 7-1l7 6-4 7-8-4Q0 7 1 3z" fill="#e5e5e5" stroke="#333" stroke-width="1.300"/><circle cx="5.500" cy="5.500" r="1.500" fill="#333"/><path d="M8 6l4 3M6 8.500l4 3" stroke="#333"/></svg></footer>

<div class="taskbar">
  <div class="start"><svg viewBox="0 0 20 20"><path d="M0 3 9 1.700V9.500H0zM10 1.500 20 0v9.500H10zM0 10.500h9v7.800L0 17zM10 10.500h10V20l-10-1.500z" fill="#fff"/></svg></div>
  <div class="tsearch"><svg class="tmag" viewBox="0 0 22 22"><circle cx="13" cy="8.500" r="6.800" fill="none" stroke="#222" stroke-width="1.500"/><path d="M8 13.500 1.500 20.500" stroke="#222" stroke-width="1.500"/></svg><span>Type here to search</span>
    <svg class="sparks" viewBox="0 0 78 32"><use href="#sparkle" x="15" y="1" width="29" height="29"/><use href="#sparkle" x="51" y="14" width="14" height="14"/><path d="M6 21l1.500 3.500 4 .5-3.500 2 .5 4-3-2.500-4 1.500 1.500-4L0 23l4-.5z" fill="#0fa2ee"/><circle cx="50" cy="4" r="2.700" fill="#ef6a32"/><circle cx="73" cy="29" r="2.700" fill="#84cb4a"/></svg></div>
  <div class="apps">
    <span class="a-view"><svg viewBox="0 0 22 22"><path d="M1 1v3h12V1M1 21v-3.500h12V21M1 7h12v8H1zM19 1v3M19 11v10" fill="none" stroke="#eee" stroke-width="1.300"/><path d="M17.700 6.500h2.600V10h-2.600z" fill="#fff"/></svg></span>
    <span><svg><use href="#copilot"/></svg></span>
    <span><svg viewBox="0 0 30 30"><path d="M1 4q0-2 2-2h8l3 3h13q2 0 2 2v6H1z" fill="#e2a313"/><path d="M1 7h26q2 0 2 2v17q0 2-2 2H3q-2 0-2-2z" fill="#ffcf4d"/><path d="M6 29v-9q0-3 3-3h12q3 0 3 3v9h-5v-6h-8v6z" fill="#3f92dc"/></svg></span>
    <span><svg viewBox="0 0 32 30"><path d="M3 4h5v3H3z" fill="#42b4ee"/><path d="M3 6h6l3-4h9l3 4h5q2 0 2 2v18q0 2-2 2H3q-2 0-2-2V8q0-2 2-2z" fill="#777c84"/><circle cx="16" cy="16.500" r="9" fill="#e8eaee"/><circle cx="16" cy="16.500" r="6.800" fill="url(#g-cam)"/><circle cx="27.500" cy="9.500" r="1.200" fill="#dde"/></svg></span>
    <span><svg><use href="#copilot"/></svg><em>M365</em></span>
    <span class="run"><svg viewBox="0 0 30 30"><path d="M15 0q14 0 15 14 0 6-7 6-4 0-5-2 2-6-4-9-8-3-13 5Q2 1 15 0z" fill="url(#g-edge)"/><path d="M0 16Q1 8 8 7.500q6 0 8 5-5 0-5 6 1 8 12 7 3-.5 5-2Q23 31 14 30 1 28 0 16z" fill="#1a7bd0"/><path d="M11 18q1 8 12 7 3-.5 5-2Q23 31 14 30 8 24 11 18z" fill="#123f94"/><path d="M0 20h15v11H0z" fill="#d97d10"/><path d="M5 20v-2h5v2M0 25h15" fill="none" stroke="#7d4203" stroke-width="1.300"/><path d="M6.500 24h2v2.500h-2z" fill="#ffe27a"/></svg></span>
    <span class="run pc"><svg viewBox="0 0 30 30"><path d="M1 1h28v28H1z" fill="url(#g-pc)"/><path d="M5 5h20v20H5z" fill="#000"/><path d="M7 21.500h8" stroke="#fff" stroke-width="1.600"/></svg><em>PC</em></span>
    <span class="run cur"><svg viewBox="0 0 30 32"><path d="M1 6 15 1l14 5v20l-14 5-14-5z" fill="#a50f16"/><path d="M1 6 15 1l14 5-14 5z" fill="#e8232b"/><path d="M15 11 29 6v20l-14 5z" fill="#7c0a10"/><path d="M1 6l14 5v20L1 26z" fill="#c7161d"/><path d="M11.500 13.500q-7-2-7 2c0 3 7 2 7 6 0 3-4 3-7.500 1M17 12.500l1.700 10 3-8.500 2 7 3.300-11" fill="none" stroke="#fff" stroke-width="2.600"/></svg><em>2020</em></span>
    <span class="run"><svg viewBox="0 0 30 30"><circle cx="15" cy="15" r="13" fill="#1e1c20" stroke="#ddd" stroke-width="1.500"/><path d="M15 15Q9 12 11 5M15 15q1 7-6 9.500M15 15q6-3.500 10 1.500M11 5q-3 4-2 8M24 16.500q-4-1-8 4M9 23.500q5 0 6-8" fill="none" stroke="#c8c8c8" stroke-width="1.500"/></svg></span>
  </div>
  <div class="help"><svg viewBox="0 0 32 32"><circle cx="14" cy="16" r="13.500" fill="#1495d8" stroke="#fff" stroke-width="2"/></svg><b>?</b><svg class="info" viewBox="0 0 14 14"><circle cx="7" cy="7" r="6.500" fill="#f5ae2a"/><path d="M7 5.500v5.500M7 2.500v1.700" stroke="#fff" stroke-width="2"/></svg></div>
  <div class="weather"><svg viewBox="0 0 26 32"><path d="M4 1l17 4v25L4 31z" fill="#d8551c"/><path d="M1 8q6-4 12 0t12 0M1 15q6-4 12 0t12 0M1 22q6-4 12 0t12 0" fill="none" stroke="#f79a58" stroke-width="2.600"/></svg><span>Air quality forecast</span></div>
  <div class="tray">
    <svg class="y1" viewBox="0 0 20 20"><path d="M2.500 13.500 10 5.500l7.500 8" /></svg>
    <svg class="y2" viewBox="0 0 20 20"><path d="M4 6h8.500v9H4zM12.500 9l3.500-2.500v8L12.500 12M4 2.500q4.500-3 9 0M4 18q4.500 3 9 0"/></svg>
    <svg class="y3" viewBox="0 0 20 20"><rect x="6.500" y="0" width="7.500" height="13" rx="1" fill="#fff"/><path d="M4 9q0 6.500 6 6.500T16.500 9M10.200 15.500v4M7 19.300h6.500"/></svg>
    <svg class="y4" viewBox="0 0 20 20"><path d="M1 2.500 19 .5v13M1 2.500v14l10 1M6 8q3-5 7 0M14 5v3h-3M6 12v-3M7 12q2 2 4 0"/><circle cx="15.500" cy="15.500" r="4.300" fill="#2f74c4" stroke="none"/></svg>
    <svg class="y5" viewBox="0 0 20 20"><path d="M7 8.500h10v6H7z" fill="#fff"/><path d="M19.500 10v3.500M7 6.500h11v10H4V10M1 2v3M4.500 2v3M0 5h5.500v2l-1.500 1.500H1.500L0 7z"/></svg>
    <svg class="y6" viewBox="0 0 20 20"><path d="M3 18Q3 5 17 3M6.500 18Q6.500 9 17 7.500M10 18q0-6 7-6.500"/><circle cx="15" cy="16.500" r="2" fill="#fff" stroke="none"/></svg>
    <svg class="y7" viewBox="0 0 20 20"><path d="M1 7.500h3.500L9 3v14l-4.500-4.500H1zM11.500 7.500q2 2.500 0 5M14 5q4 5 0 10"/><path d="M16.500 2.500q6 7.500 0 15" stroke="#888"/></svg>
    <svg class="y8" viewBox="0 0 20 20"><path d="M2 14q-2-5 4-6 4 0 8 5 4-3 4-5-2-3-8 3-4 8-7 7t1-6L13 1.500q2-1 3 1L7 15"/></svg>
  </div>
  <div class="clock">3:33 AM<br>9/6/2025</div>
  <div class="notif"><svg viewBox="0 0 22 22"><path d="M0 1h22v16h-6l-5 5v-5H0z" fill="#fff"/><path d="M4 5.500h14M4 9.500h14M4 13.500h9" stroke="#222" stroke-width="1.500"/></svg><em>1</em></div>
</div>
</body>
</html>
```
FILE: styles.css
```css
* { box-sizing: border-box; }
body { margin: 0; width: 1920px; height: 1080px; overflow: hidden; display: flex; flex-direction: column; background: #f7f7f7; font-family: "Open Sans", "Noto Sans", sans-serif; font-size: 14px; color: #111; }
i, em { font-style: normal; display: block; }
svg { display: block; flex: none; }
.defs { position: absolute; }
.ic { width: 18px; height: 18px; overflow: visible; }
.caret { width: 8px; height: 5px; color: #333; }

/* title bar */
.titlebar { height: 33px; border-bottom: 1px solid #808080; display: flex; align-items: center; flex: none; padding-left: 10px; position: relative; }
.brand { width: 146px; height: 37px; align-self: flex-start; z-index: 3; border: 1px solid #8a8a8a; border-top: 0; outline: 1px solid #fff; outline-offset: -2px; background: linear-gradient(135deg, #fff 20%, #d4d4d6); display: flex; align-items: center; padding: 0 5px 0 4px; gap: 5px; flex: none; }
.ds { width: 28px; height: 32px; margin-top: -6px; }
.brand-name { font: italic 16.500px/1 "Open Sans", sans-serif; color: #d8261c; letter-spacing: -.2px; padding-top: 5px; white-space: nowrap; }
.brand-name b { font-weight: 800; letter-spacing: 0; }
.brand-arrow { width: 22px; height: 32px; margin-right: 30px; border-right: 1px solid #aaa; position: relative; flex: none; }
.brand-arrow::before { content: ""; position: absolute; left: 6px; top: 10px; border: 6px solid transparent; border-left: 8px solid #222; border-right: 0; }
.quick { display: flex; align-items: center; width: 358px; flex: none; padding-top: 2px; }
.quick .ic { width: 20px; height: 20px; }
.quick .gap6 { margin-right: 6px; }
.cc { width: 18px; margin-right: 2px; display: flex; justify-content: center; padding-bottom: 1px; }
.cc.last { margin-right: -1px; }
.dim .caret, .caret.dim { color: #999; }
.select-btn { display: flex; align-items: center; width: 40px; height: 26px; border: 1px solid #777; margin-right: 3px; justify-content: space-between; padding-right: 2px; background: #fafafa; }
.select-btn i { width: 27px; height: 24px; background: #b2b2b2; display: flex; align-items: center; justify-content: center; border-right: 1px solid #777; }
.doc-title { margin-left: 285px; width: 380px; padding-left: 166px; font-size: 13.500px; letter-spacing: -.25px; height: 26px; line-height: 27px; flex: none; }
.search { width: 252px; height: 29px; border: 1px solid #111; background: #ebecef; position: absolute; left: 1521px; top: 2px; display: flex; align-items: center; padding-left: 6px; }
.prompt { width: 19px; height: 19px; background: #222; border: 1px solid #222; outline: 1px solid #fff; outline-offset: -2px; padding: 1px; }
.prompt svg { width: 15px; height: 15px; }
.search-text { margin-left: 7px; color: #666; font-size: 13px; letter-spacing: -.1px; width: 177px; }
.mag { width: 24px; height: 24px; }
.search .caret { margin-left: 5px; }
.winctl { position: absolute; right: 0; top: 5px; height: 24px; width: 140px; display: flex; align-items: center; color: #333; }
.person { margin: 0 9px 0 1px; }
.qm { font-weight: 700; font-size: 19px; line-height: 24px; color: #222; width: 13px; margin-left: 2px; }
.winctl .caret { margin: 0 8px 1px 10px; }
.b1 { margin-right: 7px; } .b2 { margin-right: 8px; }

/* ribbon */
.ribbon-row { display: flex; height: 87px; flex: none; }
.ribbon { width: 1857px; border-right: 1px solid #808080; border-bottom: 1px solid #808080; display: flex; padding-top: 6px; }
.mini-bar { flex: 1; height: 33px; border: 1px solid #808080; border-left: 0; display: flex; align-items: center; }
.grip-v { width: 0; height: 27px; border-left: 2px dotted #999; margin-left: 2px; }
.play { border: 6px solid transparent; border-left: 9px solid #222; border-right: 0; margin-left: 18px; }
.dbl { width: 9px; height: 11px; margin-left: 14px; }
.cmd { height: 79px; display: flex; flex-direction: column; align-items: center; font-size: 14px; line-height: 19px; text-align: center; white-space: nowrap; padding-top: 6px; letter-spacing: -.5px; flex: none; }
.cmd span { margin-top: 1px; height: 38px; }
.cmd .caret { margin-top: 2px; }
.cmd.two { padding-top: 13px; }
.off { color: #b2b2b2; }
.off .caret { color: #888; }
.on { background: #b0b0b0; border: 1px solid #666; }
.cmd.on { padding-top: 12px; }
.w48 { width: 48px; } .w51 { width: 51px; } .w58 { width: 58px; } .w61 { width: 61px; } .w66 { width: 66px; } .w71 { width: 71px; } .w86 { width: 86px; } .w98 { width: 98px; } .w104 { width: 104px; } .w158 { width: 158px; }
.vsep { width: 1px; height: 78px; background: #b5b5b5; flex: none; }
.ml7 { margin-left: 7px; }
.entities { width: 148px; display: grid; grid-template-columns: 20px 20px 20px 20px 20px 20px 20px; grid-auto-rows: 26px; align-items: center; justify-items: center; padding-left: 4px; flex: none; }
.stack { width: 199px; padding-left: 4px; flex: none; }
.stack div { height: 26px; display: flex; align-items: center; letter-spacing: -.45px; padding-bottom: 1px; }
.stack span { width: 152px; margin-left: 8px; }
.stack .caret { margin-left: 4px; }

/* workspace */
.middle { display: flex; height: 889px; flex: none; }
.workspace { width: 1713px; flex: none; position: relative; display: flex; flex-direction: column; background:
  linear-gradient(to bottom, rgba(254,254,254,0) 52%, rgba(254,254,254,.35) 57%, rgba(254,254,254,.8) 61%, #fefefe 67%, rgba(254,254,254,.95) 80%, rgba(252,252,253,.78) 100%),
  radial-gradient(ellipse 420px 440px at 100% 0, rgba(244,245,248,.9), rgba(240,242,246,.5) 50%, rgba(240,242,246,0) 100%),
  linear-gradient(to bottom, rgba(217,221,233,0) 22%, rgba(217,221,233,.15) 34%, rgba(217,221,233,.75) 53%, rgba(217,221,233,.75) 60%),
  radial-gradient(ellipse 640px 760px at 1500px 440px, #d9dce8 0%, #dcdfea 40%, rgba(226,229,238,.7) 68%, rgba(240,242,246,0) 100%), #fefefe; }
.cm-tabs { display: flex; height: 28px; line-height: 27px; font-size: 14.500px; letter-spacing: -.4px; flex: none; }
.cm-tabs span { background: #d4d4d4; border-right: 1px solid #808080; border-bottom: 1px solid #808080; text-align: center; white-space: nowrap; color: #222; }
.cm-tabs .active { background: #f7f7f7; border-bottom-color: #f7f7f7; font-weight: 700; }
.t1 { width: 75px; } .t2 { width: 67px; } .t3 { width: 75px; } .t4 { width: 98px; } .t5 { width: 94px; } .t6 { width: 91px; } .t7 { width: 70px; } .t8 { width: 74px; } .t9 { width: 136px; } .t10 { width: 173px; } .t11 { width: 56px; } .t12 { width: 158px; } .t13 { width: 128px; }
.cm-tabs .t6 { letter-spacing: -.15px; } .cm-tabs .t9 { letter-spacing: -.2px; } .cm-tabs .t10 { letter-spacing: .1px; } .cm-tabs .t12 { letter-spacing: -.3px; } .cm-tabs .t13 { letter-spacing: -.1px; }
.doc-area { display: flex; height: 840px; flex: none; }
.side { width: 85px; background: #f7f7f7; display: flex; flex: none; align-items: flex-start; }
.bar { display: flex; flex-direction: column; align-items: center; gap: 8px; padding-top: 3px; border-bottom: 1px solid #808080; position: relative; }
.bar1 { width: 34px; height: 349px; border-right: 1px solid #808080; padding-right: 1px; }
.bar2 { width: 50px; height: 557px; border-left: 1px solid #808080; margin-left: -1px; padding-right: 17px; }
.grip { width: 27px; height: 0; border-top: 2px dotted #999; margin-bottom: 4px; align-self: flex-start; margin-left: 3px; }
.bar2 .grip { width: 46px; }
.hsep { width: 25px; height: 1px; background: #808080; margin: -2px 0 1px; flex: none; }
.bar2 .h1 { width: 44px; align-self: flex-start; margin: -2px 0 0 5px; }
.bar2 .h2 { width: 44px; align-self: flex-start; margin: -1px 0 1px 5px; }
.with-caret { display: flex; align-items: center; gap: 12px; margin-right: -20px; }
.abc { width: 18px; height: 18px; display: flex; flex-direction: column; align-items: flex-end; }
.abc b { font-weight: 600; font-size: 9.500px; line-height: 9px; width: 18px; letter-spacing: -.4px; white-space: nowrap; }
.abc svg { width: 13px; height: 10px; }

.fm { width: 273px; background: #f7f7f7; border-left: 1px solid #b8b8b8; border-right: 1px solid #808080; position: relative; flex: none; display: flex; flex-direction: column; }
.fm-top { height: 25px; margin-right: 3px; border-bottom: 1px solid #bbb; border-top: 1px solid #8fb3c0; display: flex; justify-content: center; align-items: center; }
.dot { width: 6px; height: 6px; border-radius: 50%; background: #ccc; border: 1px solid #888; }
.fm-tabs { display: flex; height: 26px; margin: 4px 3px 0 1px; position: relative; border-bottom: 1px solid #bbb; flex: none; }
.fm-tabs span { width: 40px; height: 26px; border: 1px solid #808080; border-left: 0; background: #d0d0d0; display: flex; align-items: center; justify-content: center; }
.fm-tabs .active { background: #f7f7f7; border-bottom-color: #f7f7f7; }
.more { width: 8px; height: 12px; margin: 6px 0 0 54px; }
.filter { margin: 1px 0 0 4px; width: 262px; height: 31px; border: 1px solid #bbb; padding: 6px 0 0 1px; flex: none; }
.tree { padding: 0 0 0 3px; height: 315px; font-size: 15px; letter-spacing: -.25px; flex: none; }
.tree div { height: 24px; display: flex; align-items: center; white-space: nowrap; }
.tree span { margin-left: 5px; line-height: 22px; padding-bottom: 1px; }
.tw { width: 22px; padding-left: 5px; flex: none; }
.tree .root { width: 266px; letter-spacing: -.1px; }
.tree .child .tw { width: 45px; }
.tw.r::before { content: ""; display: block; width: 0; border: 4px solid transparent; border-left: 5px solid #555; border-right: 0; }
.tw.d::before { content: ""; display: block; width: 0; border: 4px solid transparent; border-top: 5px solid #555; border-bottom: 0; }
.tw.d { padding-left: 3px; }
.rollback { height: 4px; background: #348dc6; width: 270px; margin-top: -3px; flex: none; }
.hscroll { margin: auto 2px 5px 1px; height: 20px; background: #f0f0f0; display: flex; align-items: center; padding: 0 5px 0 4px; }
.hscroll svg { width: 8px; height: 12px; }
.thumb { width: 184px; height: 20px; background: #cdcdcd; margin: 0 50px 0 8px; }
.fm-handle { position: absolute; left: 271px; top: 381px; width: 12px; height: 49px; border: 1px solid #808080; border-left-color: #f7f7f7; background: #f7f7f7; z-index: 2; display: flex; align-items: center; justify-content: center; padding-right: 2px; }

.viewport { flex: 1; position: relative; }
.hud { display: flex; align-items: center; padding: 5px 0 0 501px; width: 860px; }
.hud .ic { margin-right: 7.600px; width: 18px; height: 19px; }
.hud .caret { margin: 2px 6.500px 0 0; color: #777; }
.nozzle { position: absolute; left: 315px; top: 45px; width: 720px; height: 720px; }
.nozzle svg { position: absolute; inset: 0; width: 720px; height: 720px; }
.shade { position: absolute; inset: 13px; border-radius: 50%;
  -webkit-mask: radial-gradient(circle, transparent 96px, #000 97px); mask: radial-gradient(circle, transparent 96px, #000 97px);
  background:
  radial-gradient(ellipse 34px 13px at 45.500% 63%, rgba(190,196,220,.8), transparent),
  radial-gradient(ellipse 85px 66px at 33.500% 65.500%, rgba(180,185,205,.85), rgba(176,181,200,.4) 45%, transparent),
  radial-gradient(ellipse 85px 120px at 63% 43%, rgba(80,82,93,.9), transparent),
  radial-gradient(ellipse 60px 80px at 37% 42%, rgba(80,82,93,.6), transparent),
  conic-gradient(from 0deg, #51535e 0deg, #51535e 66deg, #5a5d68 77deg, #656875 92deg, #6f7181 106deg, #7c7e91 126deg, #84889b 145deg, #8c91a6 165deg, #9297ac 182deg, #9499af 208deg, #9da2b8 225deg, #9a9fb4 233deg, #8b8fa3 243deg, #7b7d8f 256deg, #6c6e7e 270deg, #5e616c 284deg, #52545f 298deg, #51535e 360deg); }
.triad { position: absolute; left: 4px; top: 720px; width: 70px; height: 70px; }
.view-name { position: absolute; left: 12px; top: 817px; font: 600 16px/24px Lato, sans-serif; letter-spacing: .2px; }
.doc-ctl { position: absolute; left: 1579px; top: 6px; display: flex; gap: 8px; color: #999; }
.flip { transform: scaleX(-1); }
.tp-tabs { position: absolute; right: 0; top: 57px; width: 33px; }
.tp-tabs span { height: 31px; border: 1px solid #808080; background: #d0d0d0; display: flex; align-items: center; justify-content: center; }
.tp-tabs .active { height: 29px; background: #f9f9f9; border-right: 0; border-bottom: 0; }
.model-tabs { height: 21px; background: #f7f7f7; border-top: 1px solid #808080; border-bottom: 1px solid #808080; display: flex; padding-left: 86px; line-height: 19px; font-size: 15px; letter-spacing: -.2px; margin-right: 3px; flex: none; }
.model-tabs span { border-right: 1px solid #808080; background: #d4d4d4; white-space: nowrap; }
.model-tabs .active { background: #f7f7f7; font-weight: 700; color: #000; }
.nav { display: flex; width: 82px; border-top: 1px solid #111; background: #a6a9bf; }
.nav i { width: 20px; border: 1px solid #8b8da3; display: flex; align-items: center; justify-content: center; }
.nav svg { width: 11px; height: 11px; }
.m1 { width: 76px; padding-left: 15px; } .m2 { width: 89px; padding-left: 11px; } .m3 { width: 144px; padding-left: 13px; }

/* task pane */
.taskpane { flex: 1; border-left: 1px solid #555; border-bottom: 1px solid #333; margin-bottom: 1px; background: #f7f7f7; }
.tp-head { height: 23px; background: #a9aaae; border-bottom: 1px solid #111; display: flex; align-items: center; padding: 0 0 2px 9px; white-space: nowrap; letter-spacing: -.4px; font-size: 15px; }
.tp-head b { width: 145px; color: #000; }
.chev { width: 11px; font-size: 18px; line-height: 18px; font-weight: 700; color: #333; }
.tp-head .ic { width: 17px; height: 17px; margin-right: 4px; }
.tp-body { padding-left: 15px; font-size: 12.500px; color: #505050; }
.tp-body span { line-height: 17px; }
.welcome { display: flex; align-items: center; gap: 5px; padding: 32px 0 0 1px; height: 69px; }
.welcome .ic { margin-top: -3px; }
.tp-body h3 { font-size: 13px; letter-spacing: -.1px; line-height: 24px; height: 24px; margin: 0; color: #333; display: flex; align-items: center; padding-left: 3px; width: 160px; justify-content: space-between; white-space: nowrap; }
h3 svg { width: 11px; height: 8px; margin-right: 8px; }
.tp-body section { border-top: 1px solid #808080; width: 162px; }
.tp-body section div { display: flex; align-items: center; gap: 4px; height: 32px; padding-left: 3px; white-space: nowrap; }
.tp-body section .dbl2 { height: 38px; }
.tp-body section .ic { margin-top: -4px; width: 19px; height: 19px; }
.s1 { margin-top: 28px; height: 252px; }
.s2 { height: 124px; }
.s3 h3 { letter-spacing: -.25px; }

/* status bar */
.status { height: 21px; flex: none; display: flex; align-items: center; font-size: 14px; letter-spacing: .05px; line-height: 21px; padding-left: 1px; white-space: nowrap; padding-top: 3px; }
.ver { width: 1596px; }
.edit { width: 104px; letter-spacing: 0; }
.rebuild { width: 17px; height: 17px; margin: -4px 81px 0 0; }
.units { width: 67px; letter-spacing: -.1px; }
.up { transform: scaleY(-1); margin-right: 26px; }
.tag { width: 16px; height: 16px; margin-top: -5px; }

/* taskbar */
.taskbar { height: 50px; flex: none; display: flex; background: linear-gradient(90deg, #26272b 0, #1e262c 30%, #1f272b 65%, #242224 100%); color: #fff; position: relative; }
.start { width: 60px; display: flex; align-items: center; justify-content: center; }
.start svg { width: 20px; height: 20px; }
.tsearch { width: 360px; background: #f1f1f1; border: 1px solid #b5b5b5; border-bottom-color: #ccc; display: flex; align-items: center; color: #333; font-size: 18px; letter-spacing: -.15px; flex: none; }
.tmag { width: 22px; height: 22px; margin: 0 13px 0 14px; }
.tsearch span { width: 221px; padding-bottom: 1px; }
.sparks { width: 78px; height: 32px; }
.apps { display: flex; width: 806px; flex: none; }
.apps span { width: 62.200px; position: relative; left: -1px; display: flex; align-items: center; justify-content: center; }
.apps svg { width: 29px; height: 30px; }
.apps .a-view svg { width: 21px; height: 22px; }
.apps em { position: absolute; right: 15px; bottom: 10px; font: 700 8px/9px "Liberation Sans", sans-serif; background: #0b1318; border-radius: 2px; padding: 0 1px; }
.apps .cur em { background: none; right: 16px; }
.apps .pc em { font: 700 10.500px/11px "Open Sans", sans-serif; left: 21px; right: auto; bottom: 23px; }
.run::after { content: ""; position: absolute; left: 6px; right: 5px; bottom: 0; height: 3px; background: #76b9ed; }
.cur { background: #4a5156; }
.cur::after { left: 0; right: 0; }
.help { width: 32px; height: 32px; margin: 10px 0 0 0; position: relative; }
.help b { position: absolute; left: 4px; top: 3px; width: 20px; text-align: center; font-size: 22px; line-height: 26px; }
.help .info { position: absolute; left: 18px; top: 16px; width: 14px; height: 14px; }
.weather { display: flex; align-items: center; margin-left: 50px; width: 217px; font-size: 17px; letter-spacing: -.05px; gap: 13px; white-space: nowrap; padding-top: 1px; }
.weather svg { width: 25px; height: 31px; }
.tray { display: flex; align-items: center; position: relative; width: 246px; }
.tray svg { width: 20px; height: 20px; fill: none; stroke: #fff; stroke-width: 1.200; overflow: visible; margin-right: 10px; }
.tray .y1 { margin-right: 12px; } .tray .y2 { margin-right: 8px; } .tray .y3 { margin-right: 11px; } .tray .y5 { margin-right: 11px; } .tray .y7 { margin-right: 15px; }
.clock { width: 80px; text-align: center; font-size: 14.500px; line-height: 23px; letter-spacing: -.2px; padding-top: 2px; white-space: nowrap; }
.notif { margin: 14px 0 0 18px; position: relative; }
.notif svg { width: 20px; height: 21px; }
.notif em { position: absolute; left: 9px; top: 10px; width: 20px; height: 20px; border-radius: 50%; border: 1px solid #888; background: #2c2c2e; text-align: center; line-height: 18px; font-size: 14px; }
```
